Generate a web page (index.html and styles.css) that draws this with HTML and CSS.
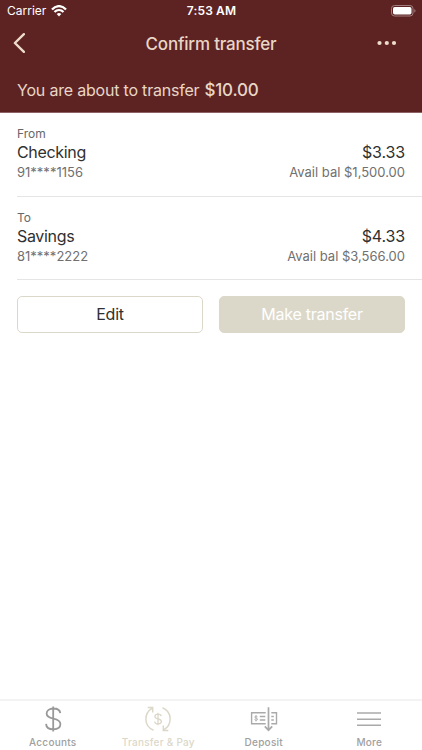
FILE: index.html
```html
<!DOCTYPE html>
<html lang="en">
<head>
<meta charset="utf-8">
<meta name="viewport" content="width=device-width, initial-scale=1">
<title>Confirm transfer</title>
<link rel="stylesheet" href="styles.css">
</head>
<body>
<div class="app">
  <header class="header">
    <div class="status">
      <div class="carrier"><span>Carrier</span>
        <svg width="16" height="12" viewBox="0 0 16 12" fill="none" stroke="#fff" stroke-width="2.2"><path d="M1 4.5C5-.1 11-.1 15 4.5M3.5 7.1c2.6-2.8 6.4-2.8 9 0"/><path d="M5.7 9.1Q8 7.1 10.3 9.1L8 11.5Z" fill="#fff" stroke="none"/></svg>
      </div>
      <time class="time">7:53 AM</time>
      <svg class="battery" width="25" height="12" viewBox="0 0 25 12"><rect x=".5" y=".5" width="21.5" height="10.5" rx="3" fill="none" stroke="#a37d7d"/><rect x="2" y="2" width="18.5" height="7.5" rx="1.7" fill="#fff"/><path d="M23.3 4v3.6q1.2-.4 1.2-1.8T23.3 4Z" fill="#a37d7d"/></svg>
    </div>
    <div class="nav">
      <svg width="12" height="20" viewBox="0 0 12 20" fill="none" stroke="#eedccb" stroke-width="2.4" stroke-linecap="round" stroke-linejoin="round"><path d="M10.9 1.2 1.9 10l9 8.8"/></svg>
      <h1 class="title">Confirm transfer</h1>
      <svg width="20" height="6" viewBox="0 0 20 6" fill="#eedccb"><circle cx="2.5" cy="3" r="2.1"/><circle cx="9.8" cy="3" r="2.1"/><circle cx="17" cy="3" r="2.1"/></svg>
    </div>
    <p class="summary"><span>You are about to transfer</span><strong>$10.00</strong></p>
  </header>
  <main class="main">
    <section class="account">
      <div class="label">From</div>
      <div class="row primary"><span>Checking</span><span class="amount">$3.33</span></div>
      <div class="row secondary"><span>91****1156</span><span>Avail bal $1,500.00</span></div>
    </section>
    <section class="account to">
      <div class="label">To</div>
      <div class="row primary"><span>Savings</span><span class="amount">$4.33</span></div>
      <div class="row secondary"><span>81****2222</span><span>Avail bal $3,566.00</span></div>
    </section>
    <div class="actions">
      <button class="button edit">Edit</button>
      <button class="button make">Make transfer</button>
    </div>
  </main>
  <nav class="tabs">
    <div class="tab">
      <svg width="30" height="28" viewBox="0 0 30 28" fill="none" stroke="#999" stroke-width="1.8"><path d="M15.2 1.5v25M22.3 8.2C22 5 19.3 3.5 15.4 3.5c-4 0-6.8 2-6.8 5.1 0 3.4 3.1 4.3 6.8 5.1 4.1.9 7 2 7 5.4 0 3.3-2.9 5.2-7 5.2-4.3 0-7.2-1.9-7.3-5.4"/></svg>
      <span>Accounts</span>
    </div>
    <div class="tab active">
      <svg width="30" height="28" viewBox="0 0 30 28" fill="none" stroke="#dcd8c9" stroke-width="1.5"><path d="M10.5 25.2C.5 21.1.6 8.2 9.3 3.1M4.7 2.6h5v4.9M19.5 2.8c10 4.1 9.9 17 1.2 22.1M25.3 25.4h-5v-4.9"/><path stroke-width="1.3" d="M15 7.8v12.4M18.2 11.2c-.2-1.5-1.4-2.1-3.2-2.1s-3.1.8-3.1 2.4c0 1.8 1.7 2.1 3.2 2.5 1.8.4 3.3.9 3.3 2.6S17 19 15.1 19s-3.3-.8-3.4-2.5"/></svg>
      <span>Transfer &amp; Pay</span>
    </div>
    <div class="tab">
      <svg width="30" height="28" viewBox="0 0 30 28" fill="none" stroke="#aaa" stroke-width="1.4"><path d="M16.7 7.8H2.6v11h14.1M22.3 7.8h5.2v11h-5.2M10.8 11.5h5.5M10.8 15h5.5M22.3 11.5h2.5M22.3 15h2.5"/><path stroke-width="1.7" d="M19.5 2.2v23M15.8 21.3l3.7 3.9 3.7-3.9"/><path stroke-width=".9" d="M7 10.2v6.2M8.5 11.8c-.4-1-2.7-.9-2.7.3 0 1.4 2.8.7 2.8 2.2 0 1.3-2.6 1.4-3.1.2"/></svg>
      <span>Deposit</span>
    </div>
    <div class="tab">
      <svg width="30" height="28" viewBox="0 0 30 28" fill="none" stroke="#aaa" stroke-width="1.6"><path d="M3 8h24M3 14.2h24M3 20.2h24"/></svg>
      <span>More</span>
    </div>
  </nav>
</div>
</body>
</html>
```
FILE: styles.css
```css
* { box-sizing: border-box; }
body { margin: 0; font-family: Inter, "Liberation Sans", sans-serif; background: #fff; }
svg { display: block; flex: none; }
.app { width: 422px; height: 750px; display: flex; flex-direction: column; }
.header { height: 113px; background: #5d2323; color: #e9d6c6; border-bottom: 1px solid #8d6265; flex: none; }
.status { height: 21px; display: grid; grid-template-columns: 1fr auto 1fr; align-items: center; padding: 0 6px 0 7px; color: #fff; font-size: 12px; }
.carrier { display: flex; align-items: center; gap: 5px; }
.time { font-weight: 600; letter-spacing: .15px; }
.battery { justify-self: end; }
.nav { height: 43px; display: grid; grid-template-columns: 1fr auto 1fr; align-items: center; padding: 0 25px 0 13px; }
.nav > svg:last-child { justify-self: end; }
.title { margin: 2px -6px 0 6px; font-size: 17px; font-weight: 450; letter-spacing: -.2px; }
.summary { margin: 15px 17px 0; display: flex; align-items: baseline; gap: 5px; font-size: 16px; line-height: 22px; letter-spacing: -.2px; }
.summary strong { font-size: 17px; font-weight: 500; line-height: 22px; }
.main { flex: 1; }
.account { height: 84px; margin-left: 17px; padding: 12px 17px 0 0; border-bottom: 1px solid #e5e5e5; }
.to { height: 83px; }
.label { font-size: 12px; line-height: 16px; padding-top: 1px; height: 16px; color: #686868; }
.row { display: flex; justify-content: space-between; }
.primary { font-size: 16px; line-height: 22px; color: #303030; letter-spacing: -.33px; }
.primary .amount { letter-spacing: -.15px; }
.secondary { font-size: 13px; line-height: 18px; color: #707070; }
.actions { display: flex; gap: 16px; padding: 16px 17px 0; }
.button { flex: 1; height: 37px; padding: 0 0 1px; border: 1px solid #dcd8c9; border-radius: 5px; font: 400 16px Inter, sans-serif; letter-spacing: -.25px; }
.edit { background: #fff; color: #303030; }
.make { background: #dcd8c9; color: #fff; }
.tabs { height: 51px; border-top: 2px solid #f3f3f3; display: grid; grid-template-columns: repeat(4, 1fr); flex: none; }
.tab { display: flex; flex-direction: column; align-items: center; padding-top: 4px; color: #a0a0a0; font-size: 10px; line-height: 18px; font-weight: 500; letter-spacing: .25px; }
.tab.active { color: #dcd8c9; }
```
